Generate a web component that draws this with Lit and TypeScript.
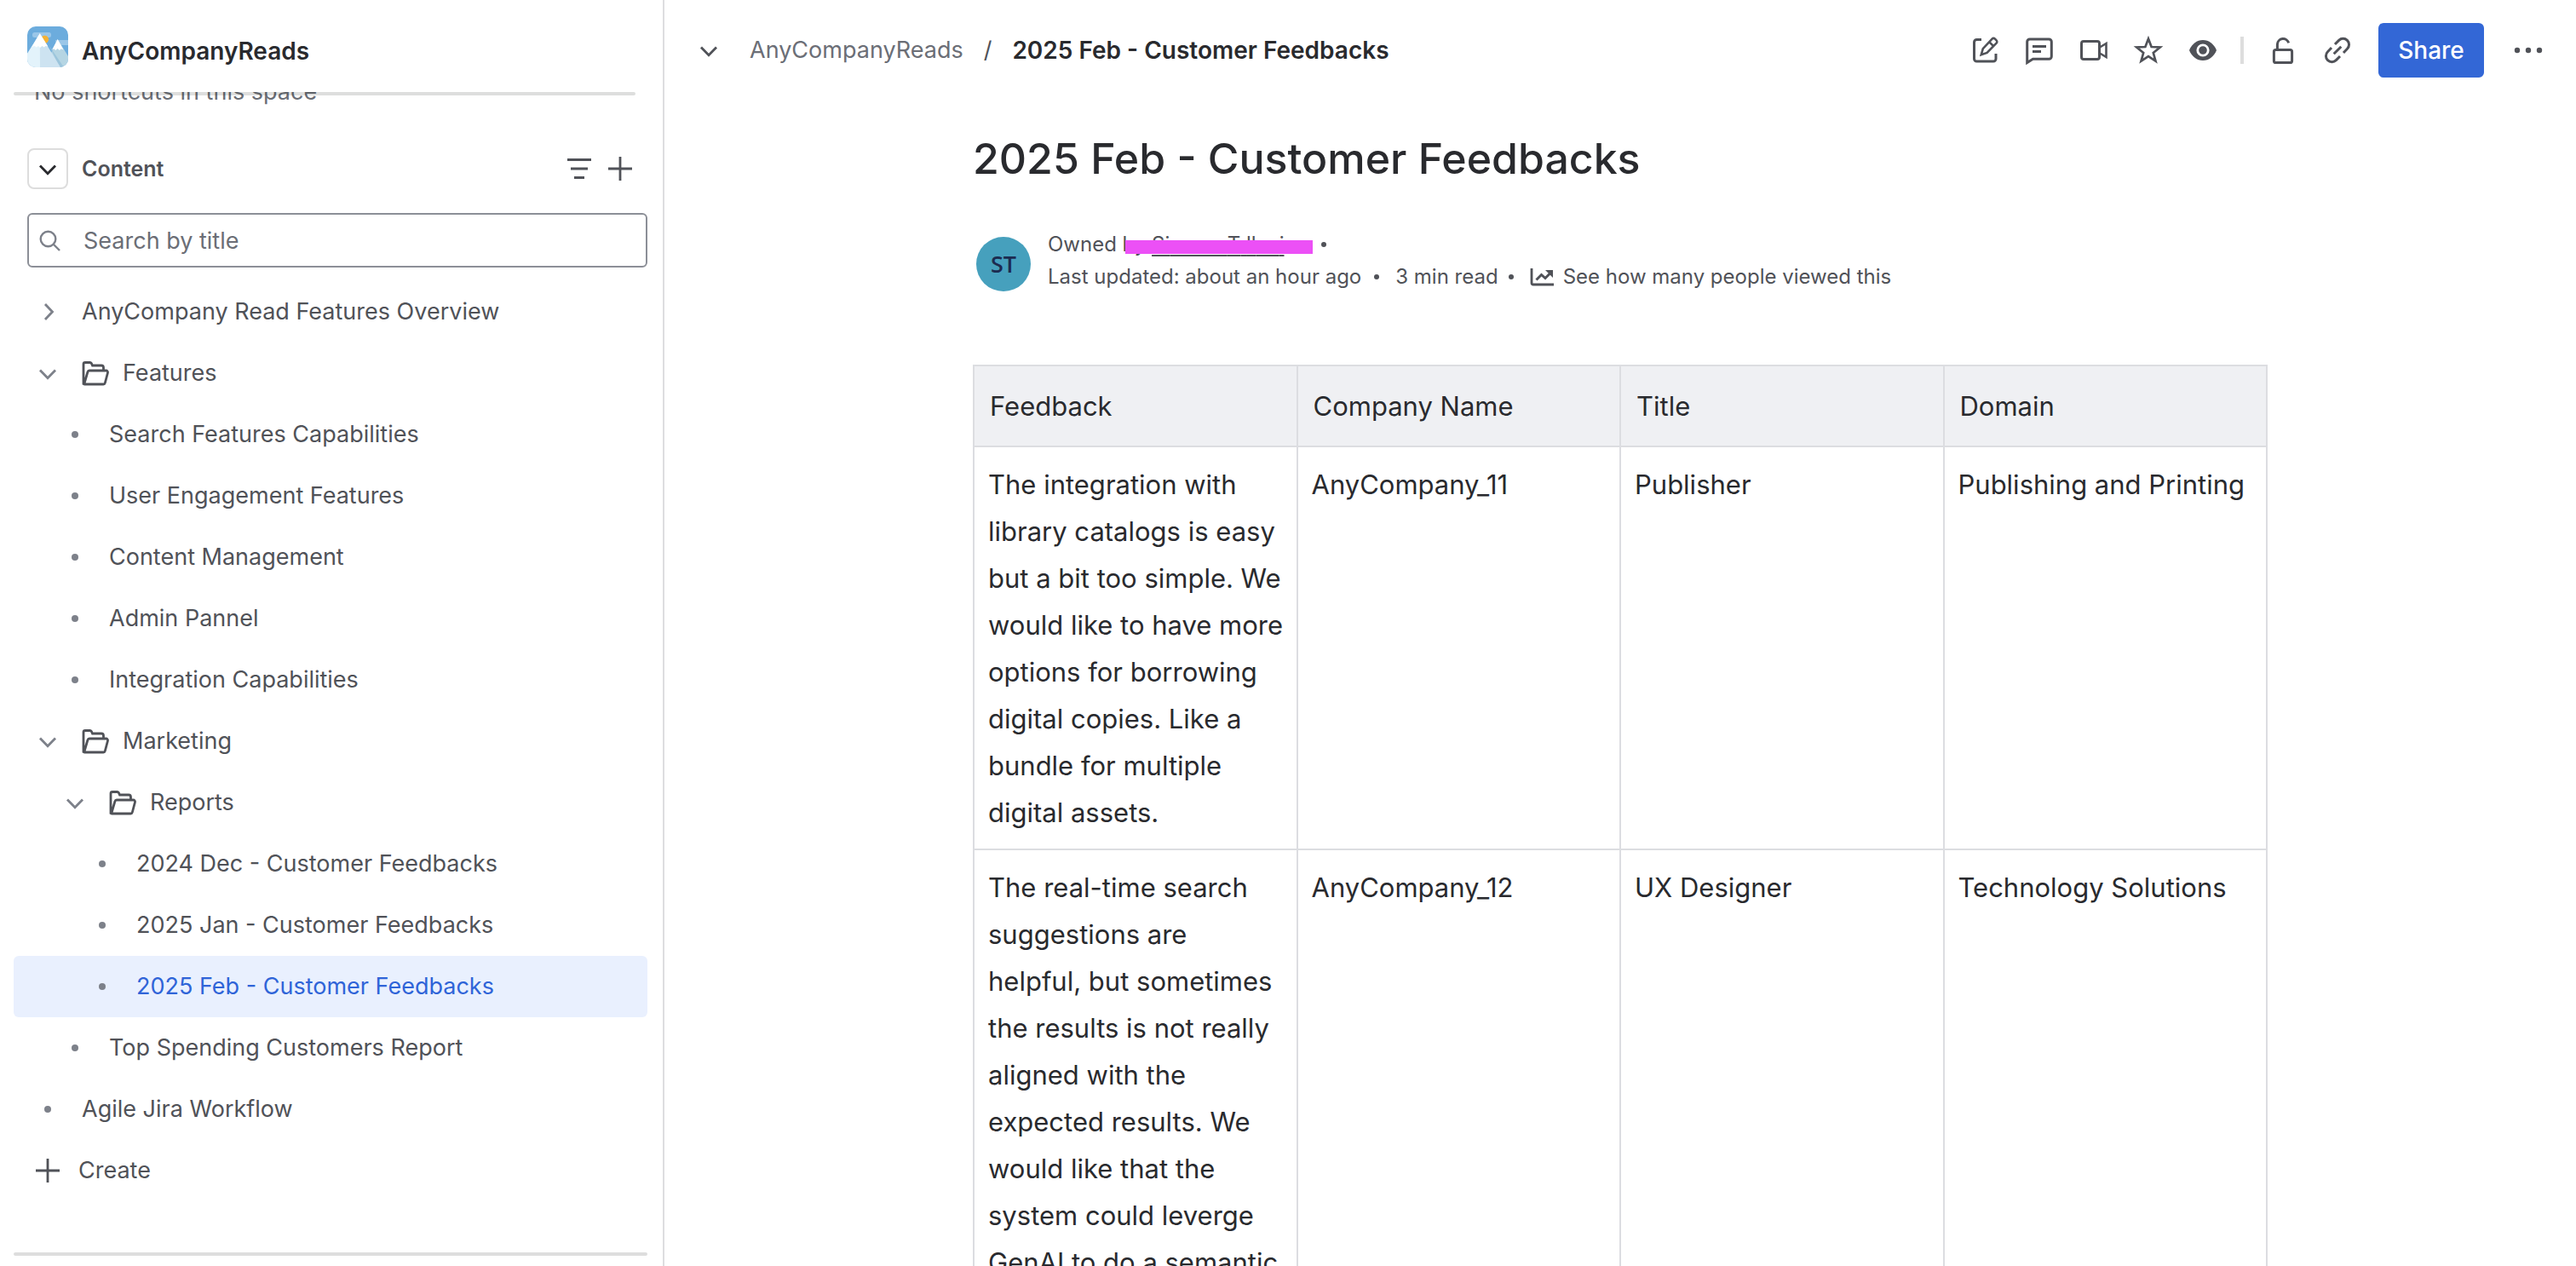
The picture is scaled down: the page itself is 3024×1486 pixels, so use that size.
import { LitElement, html, css, svg, nothing, type TemplateResult } from "lit";
import { customElement, property } from "lit/decorators.js";
import { classMap } from "lit/directives/class-map.js";

type IconName =
  | "edit" | "comment" | "video" | "star" | "eye" | "unlock" | "link" | "more"
  | "filter" | "plus" | "down" | "right" | "search" | "folder" | "trend" | "dot";

const icons: Record<IconName, TemplateResult> = {
  edit: svg`<path d="M20 11.5h-5.5a3 3 0 0 0-3 3V34a3 3 0 0 0 3 3H34a3 3 0 0 0 3-3v-6"/>
    <path stroke-width="2.6" d="M19.8 29.2l2-7L32.6 10.6a2.3 2.3 0 0 1 3.3 0l1.7 1.7a2.3 2.3 0 0 1 0 3.3L26.6 26.9zM29.4 14.4l4.6 4.6"/>`,
  comment: svg`<path d="M9.7 38.5V14a3 3 0 0 1 3-3H35.3a3 3 0 0 1 3 3v17.3a3 3 0 0 1-3 3H16.5z"/>
    <path d="M16 19.6h16M16 25.5h10"/>`,
  video: svg`<rect x="9.5" y="13.5" width="21" height="21" rx="2.5"/><path stroke-width="2.6" d="M31 20.5l7.5-4.5v16L31 27.5"/>`,
  star: svg`<path stroke-width="2.7" d="M24 10.5l3.6 9.5 10.2.5-8 6.5 2.7 9.7L24 31.2l-8.5 5.5 2.7-9.7-8-6.5 10.2-.5z"/>`,
  eye: svg`<path fill="currentColor" stroke="none" d="M8 24c3-7.5 9-12 16-12s13 4.5 16 12c-3 7.5-9 12-16 12S11 31.5 8 24z"/>
    <circle cx="24" cy="24" r="6.2" fill="currentColor" stroke="#fff" stroke-width="2.8"/>`,
  unlock: svg`<rect x="13.4" y="23.6" width="21.2" height="15" rx="2.2"/><path d="M17.4 23.5V17a6.8 6.8 0 0 1 13.3-1.6"/>`,
  link: svg`<path d="M21 17l4.6-4.6a7 7 0 0 1 9.9 9.9L31 27M27 31l-4.6 4.6a7 7 0 0 1-9.9-9.9L17 21M19.7 28.3l8.6-8.6"/>`,
  more: svg`<g fill="currentColor" stroke="none"><circle cx="11" cy="24" r="3.2"/><circle cx="24" cy="24" r="3.2"/><circle cx="37" cy="24" r="3.2"/></g>`,
  filter: svg`<path d="M10 13.5h28M14 24h20M18 34.5h12"/>`,
  plus: svg`<path stroke-width="2.8" d="M24 10v28M10 24h28"/>`,
  down: svg`<path stroke-width="2.8" d="M15 20.5l9 9.3 9-9.3"/>`,
  right: svg`<path stroke-width="2.8" d="M21 15l8.5 9-8.5 9"/>`,
  search: svg`<circle cx="22.5" cy="22.5" r="8.8" stroke-width="2.4"/><path stroke-width="2.4" d="M29 29l7 7"/>`,
  folder: svg`<path stroke-width="2.8" d="M10 37.5V13.500a2 2 0 0 1 2-2h5.5a2 2 0 0 1 1.8 1l1.2 2.500h10.5a2.500 2.500 0 0 1 2.500 2.500v3.500M11 36l4-13.500a2 2 0 0 1 2-1.500h19.500a2 2 0 0 1 2 2.500l-3.200 12a2 2 0 0 1-2 1.500H11.500a1.500 1.500 0 0 1-1.500-1.500z"/>`,
  trend: svg`<path stroke-width="2.8" d="M11 14v17a2 2 0 0 0 2 2h24"/><path stroke-width="3" d="M16.5 27.5l6-6 4.5 4 6-6"/><path fill="currentColor" stroke="none" d="M27 16h9v9z"/>`,
  dot: svg`<circle cx="24" cy="24" r="4" fill="currentColor" stroke="none"/>`,
};

@customElement("wiki-icon")
export class WikiIcon extends LitElement {
  static styles = css`
    :host { display: block; flex: none; width: 48px; height: 48px; }
    .glyph { display: block; width: 100%; height: 100%; }
  `;

  @property() name: IconName = "dot";

  render() {
    return html`<svg class="glyph" viewBox="0 0 48 48" fill="none" stroke="currentColor" stroke-width="3" aria-hidden="true">${icons[this.name]}</svg>`;
  }
}

interface TreeItem {
  label: string;
  level: number;
  marker: IconName;
  folder?: boolean;
  selected?: boolean;
}

const tree: TreeItem[] = [
  { label: "AnyCompany Read Features Overview", level: 0, marker: "right" },
  { label: "Features", level: 0, marker: "down", folder: true },
  { label: "Search Features Capabilities", level: 1, marker: "dot" },
  { label: "User Engagement Features", level: 1, marker: "dot" },
  { label: "Content Management", level: 1, marker: "dot" },
  { label: "Admin Pannel", level: 1, marker: "dot" },
  { label: "Integration Capabilities", level: 1, marker: "dot" },
  { label: "Marketing", level: 0, marker: "down", folder: true },
  { label: "Reports", level: 1, marker: "down", folder: true },
  { label: "2024 Dec - Customer Feedbacks", level: 2, marker: "dot" },
  { label: "2025 Jan - Customer Feedbacks", level: 2, marker: "dot" },
  { label: "2025 Feb - Customer Feedbacks", level: 2, marker: "dot", selected: true },
  { label: "Top Spending Customers Report", level: 1, marker: "dot" },
  { label: "Agile Jira Workflow", level: 0, marker: "dot" },
];

@customElement("wiki-sidebar")
export class WikiSidebar extends LitElement {
  static styles = css`
    :host {
      display: flex;
      flex-direction: column;
      box-sizing: border-box;
      min-height: 0;
      border-right: 2px solid #dddde0;
      color: #505258;
      font-size: 27px;
      line-height: 40px;
    }
    button, input { font: inherit; color: inherit; }
    button { padding: 0; border: 0; background: none; cursor: pointer; }
    a { color: inherit; text-decoration: none; }
    .space { display: flex; align-items: flex-end; gap: 16px; padding: 31px 32px 29px; }
    .logo { display: block; width: 48px; height: 48px; border-radius: 10px; }
    .space-name { font-size: 28px; line-height: 38px; font-weight: 600; color: #292a2e; }
    .scroll { flex: 1; min-height: 0; position: relative; overflow: hidden; }
    .rule { height: 4px; border-radius: 2px; background: #dddddd; }
    .rule.top { position: absolute; top: 0; left: 16px; right: 32px; background: rgba(11, 18, 14, 0.14); }
    .rule.bottom { margin: 0 18px 12px 16px; }
    .shortcuts { margin: -20px 40px 46px; color: #6b6e76; }
    .section { display: flex; align-items: center; padding: 0 26px 0 32px; }
    .collapse { box-sizing: border-box; width: 48px; height: 48px; display: grid; place-content: center; border: 2px solid #dddddd; border-radius: 8px; color: #292a2e; }
    .section-name { flex: 1; margin: 0 0 0 16px; font-size: 25px; line-height: 40px; font-weight: 600; }
    .search { box-sizing: border-box; display: flex; align-items: center; height: 64px; margin: 28px 18px 16px 32px; border: 2px solid #8c8f97; border-radius: 6px; color: #7d818a; }
    .field { flex: 1; min-width: 0; height: 100%; box-sizing: border-box; padding: 0 16px; border: 0; outline: 0; background: none; }
    .field::placeholder { color: #6b6e76; opacity: 1; }
    .tree { list-style: none; margin: 0; padding: 0 18px 0 16px; }
    .row { display: flex; align-items: center; height: 72px; padding-left: 16px; border-radius: 6px; }
    .row.level-1 { padding-left: 48px; }
    .row.level-2 { padding-left: 80px; }
    .row.selected { background: #e9f0fe; }
    .row.selected .page { color: #2f64d8; }
    .marker { color: #7d818a; }
    .page { flex: 1; display: flex; align-items: center; padding-left: 16px; }
    .folder { margin: 0 8px 0 -8px; }
    .create { display: flex; align-items: center; gap: 12px; }
  `;

  private renderItem(item: TreeItem) {
    const marker = html`<wiki-icon name=${item.marker}></wiki-icon>`;
    return html`
      <li class=${classMap({ row: true, [`level-${item.level}`]: true, selected: !!item.selected })}>
        ${item.marker === "dot"
          ? html`<span class="marker">${marker}</span>`
          : html`<button class="marker" aria-label="Toggle ${item.label}">${marker}</button>`}
        <a class="page" href="#" aria-current=${item.selected ? "page" : nothing}>
          ${item.folder ? html`<wiki-icon class="folder" name="folder"></wiki-icon>` : nothing}${item.label}
        </a>
      </li>
    `;
  }

  render() {
    return html`
      <div class="space">
        <svg class="logo" viewBox="0 0 48 48" aria-hidden="true">
          <rect width="48" height="48" fill="#6cacdd"/>
          <rect x="6" y="7" width="22" height="6" rx="2.5" fill="#9ac6e8"/>
          <path d="M33 16h15v6H34z" fill="#9ac6e8"/>
          <circle cx="20.5" cy="15.3" r="4.6" fill="#f5b236"/>
          <path d="M35.7 15L48 35v13H20z" fill="#b5d5e3"/>
          <path d="M26 23l17 25h-5z" fill="#9cc5dc"/>
          <path d="M14.8 8.3L0 32v16h39z" fill="#cde3f1"/>
          <path d="M14.8 8.3L0 32v16h15z" fill="#e3f3fb"/>
          <path d="M14.8 8.3L5.5 24l3-1 2.3 1.5 2.2-1.5 2 2 2.5-2 2.3 1.5 1.700-1.5 2.8.5z" fill="#fff"/>
          <path d="M35.7 15L29 27.5l2.3-1.2 2 1.7 2.3-2 2.2 2 2-1.7 2.7 1.2z" fill="#fff"/>
        </svg>
        <a class="space-name" href="#">AnyCompanyReads</a>
      </div>
      <div class="scroll">
        <div class="shortcuts">No shortcuts in this space</div>
        <div class="rule top"></div>
        <div class="section">
          <button class="collapse" aria-label="Collapse content"><wiki-icon name="down"></wiki-icon></button>
          <h2 class="section-name">Content</h2>
          <button aria-label="Filter"><wiki-icon name="filter"></wiki-icon></button>
          <button aria-label="Add content"><wiki-icon name="plus"></wiki-icon></button>
        </div>
        <label class="search">
          <wiki-icon name="search"></wiki-icon>
          <input class="field" type="text" placeholder="Search by title" aria-label="Search by title" />
        </label>
        <ul class="tree">
          ${tree.map((item) => this.renderItem(item))}
          <li class="row"><button class="create"><wiki-icon name="plus"></wiki-icon>Create</button></li>
        </ul>
      </div>
      <div class="rule bottom"></div>
    `;
  }
}

@customElement("wiki-toolbar")
export class WikiToolbar extends LitElement {
  static styles = css`
    :host { display: flex; align-items: center; justify-content: space-between; height: 118px; padding: 0 32px 0 28px; color: #505258; }
    button { padding: 0; border: 0; background: none; color: inherit; font: inherit; cursor: pointer; }
    .crumbs { display: flex; align-items: center; gap: 24px; font-size: 27px; line-height: 40px; white-space: nowrap; }
    .parent { color: #6b6e76; text-decoration: none; }
    .current { color: #292a2e; font-size: 28px; font-weight: 600; text-decoration: none; }
    .actions { display: flex; align-items: center; gap: 16px; }
    .divider { width: 4px; height: 32px; margin: 0 6px 0 4px; background: #dddddd; }
    .actions .share { height: 64px; width: 124px; margin: 0 12px 0 8px; border-radius: 6px; background: #3367d6; color: #fff; font-size: 28px; font-weight: 500; }
  `;

  private action(name: IconName, label: string) {
    return html`<button aria-label=${label}><wiki-icon name=${name}></wiki-icon></button>`;
  }

  render() {
    return html`
      <nav class="crumbs" aria-label="Breadcrumbs">
        ${this.action("down", "Show breadcrumbs")}
        <a class="parent" href="#">AnyCompanyReads</a>
        <span>/</span>
        <a class="current" href="#">2025 Feb - Customer Feedbacks</a>
      </nav>
      <div class="actions">
        ${this.action("edit", "Edit")} ${this.action("comment", "Comments")}
        ${this.action("video", "Record video")} ${this.action("star", "Star")}
        ${this.action("eye", "Watch")}
        <span class="divider"></span>
        ${this.action("unlock", "Restrictions")} ${this.action("link", "Copy link")}
        <button class="share">Share</button>
        ${this.action("more", "More actions")}
      </div>
    `;
  }
}

const columns = ["Feedback", "Company Name", "Title", "Domain"];

const feedback = [
  [
    "The integration with library catalogs is easy but a bit too simple. We would like to have more options for borrowing digital copies. Like a bundle for multiple digital assets.",
    "AnyCompany_11",
    "Publisher",
    "Publishing and Printing",
  ],
  [
    "The real-time search suggestions are helpful, but sometimes the results is not really aligned with the expected results. We would like that the system could leverge GenAI to do a semantic",
    "AnyCompany_12",
    "UX Designer",
    "Technology Solutions",
  ],
];

@customElement("wiki-page")
export class WikiPage extends LitElement {
  static styles = css`
    :host { display: block; box-sizing: border-box; width: 100%; max-width: 1520px; margin: 0 auto; padding-top: 36px; color: #292a2e; }
    .title { margin: 0 0 50px; font-size: 50px; line-height: 64px; font-weight: 500; }
    .byline { display: flex; align-items: center; gap: 20px; margin-bottom: 76px; padding-left: 4px; color: #505258; font-size: 24px; line-height: 38px; }
    .avatar { display: grid; place-items: center; width: 64px; height: 64px; border-radius: 50%; background: #46a0bd; color: #1c2b50; font-family: "Open Sans", sans-serif; font-size: 27px; font-weight: 600; }
    .details { padding-bottom: 8px; }
    .line { display: flex; align-items: center; height: 38px; white-space: pre; }
    .bullet { width: 6px; height: 6px; border-radius: 50%; background: #505258; }
    .owner { position: relative; }
    .owner-link { color: inherit; text-underline-offset: 4px; text-decoration-thickness: 2px; }
    .redaction { position: absolute; left: 91px; top: 14px; width: 220px; height: 16px; background: #ec50f6; }
    .owner-end { margin-left: 44px; }
    .updated-end { margin: 0 19px 0 15px; }
    .read-end { margin: 0 10px 0 12px; }
    .views { display: flex; align-items: center; padding: 0; border: 0; background: none; color: inherit; font: inherit; cursor: pointer; }
    .table { width: 100%; table-layout: fixed; border-collapse: collapse; font-size: 31px; line-height: 55px; text-align: left; }
    .head { padding: 19px 18px; border: 2px solid #dcdde1; background: #eff0f3; font-weight: 400; }
    .cell { padding: 16px 14px 15px 16px; border: 2px solid #dcdde1; vertical-align: top; }
  `;

  render() {
    return html`
      <h1 class="title">2025 Feb - Customer Feedbacks</h1>
      <div class="byline">
        <div class="avatar">ST</div>
        <div class="details">
          <div class="line owner"><span>Owned by </span><a class="owner-link" href="#">Si${"\u00a0".repeat(10)}T${"\u00a0"}ll${"\u00a0".repeat(4)}i</a><span class="redaction"></span><span class="bullet owner-end"></span></div>
          <div class="line"><span>Last updated: about an hour ago</span><span class="bullet updated-end"></span><span>3 min read</span><span class="bullet read-end"></span><button class="views"><wiki-icon name="trend"></wiki-icon>See how many people viewed this</button></div>
        </div>
      </div>
      <table class="table">
        <thead>
          <tr>${columns.map((name) => html`<th class="head" scope="col">${name}</th>`)}</tr>
        </thead>
        <tbody>
          ${feedback.map((row) => html`<tr>${row.map((text) => html`<td class="cell">${text}</td>`)}</tr>`)}
        </tbody>
      </table>
    `;
  }
}

@customElement("app-root")
export class AppRoot extends LitElement {
  static styles = css`
    :host { display: grid; grid-template-columns: 780px minmax(0, 1fr); grid-template-rows: 100vh; height: 100vh; overflow: hidden; background: #fff; font-family: Inter, "Liberation Sans", sans-serif; }
    .main { min-width: 0; overflow: hidden; }
  `;

  render() {
    return html`
      <wiki-sidebar></wiki-sidebar>
      <main class="main">
        <wiki-toolbar></wiki-toolbar>
        <wiki-page></wiki-page>
      </main>
    `;
  }
}
